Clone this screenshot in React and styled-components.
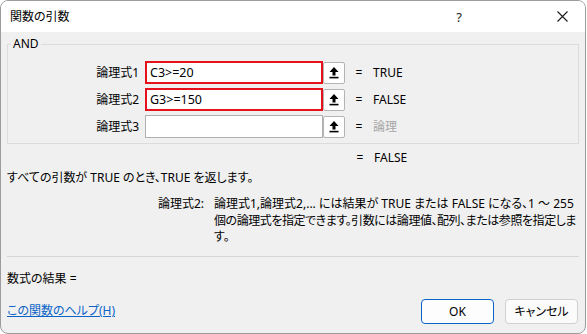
import styled, { createGlobalStyle } from "styled-components";

const GlobalStyle = createGlobalStyle`
  html, body {
    margin: 0;
    padding: 0;
    background: #ffffff;
  }
  body {
    font-family: "Noto Sans", "Noto Sans CJK JP", sans-serif;
    font-size: 12px;
    font-feature-settings: "palt";
    color: #000;
  }
`;

const args = [
  { label: "論理式1", value: "C3>=20", result: "TRUE", highlight: true },
  { label: "論理式2", value: "G3>=150", result: "FALSE", highlight: true },
  { label: "論理式3", value: "", result: "論理", muted: true },
];

const UpIcon = () => (
  <svg width="10" height="12" viewBox="0 0 10 12">
    <polygon points="5,0 9.5,5 6.5,5 6.5,8.5 3.5,8.5 3.5,5 0.5,5" fill="#000" />
    <rect x="0.5" y="9.8" width="9" height="1.6" fill="#000" />
  </svg>
);

const CloseIcon = () => (
  <svg width="11" height="11" viewBox="0 0 11 11">
    <path d="M0.5 0.5 L10.5 10.5 M10.5 0.5 L0.5 10.5" stroke="#1a1a1a" strokeWidth="1.1" fill="none" />
  </svg>
);

const App = () => {
  return (
    <>
      <GlobalStyle />
      <Window>
        <TitleBar>
          <Title>関数の引数</Title>
          <TitleButton $gap>?</TitleButton>
          <TitleButton><CloseIcon /></TitleButton>
        </TitleBar>
        <Body>
          <Group>
            <Legend>AND</Legend>
            {args.map((a) => (
              <ArgRow key={a.label}>
                <ArgLabel>{a.label}</ArgLabel>
                <InputBox $highlight={a.highlight}>{a.value}</InputBox>
                <RefButton><UpIcon /></RefButton>
                <Eq>=</Eq>
                <Value $muted={a.muted}>{a.result}</Value>
              </ArgRow>
            ))}
          </Group>
          <TotalRow>
            <Eq>=</Eq>
            <Value>FALSE</Value>
          </TotalRow>
          <Summary>すべての引数が TRUE のとき、TRUE を返します。</Summary>
          <HelpRow>
            <HelpLabel>論理式2:</HelpLabel>
            <HelpText>
              <HelpLine>論理式1,論理式2,... には結果が TRUE または FALSE になる、1 ～ 255</HelpLine>
              <HelpLine $tight>個の論理式を指定できます。引数には論理値、配列、または参照を指定しま</HelpLine>
              <HelpLine>す。</HelpLine>
            </HelpText>
          </HelpRow>
          <Divider />
          <ResultLine>数式の結果 =</ResultLine>
          <Footer>
            <HelpLink href="#">この関数のヘルプ(H)</HelpLink>
            <Buttons>
              <DialogButton $primary>OK</DialogButton>
              <DialogButton>キャンセル</DialogButton>
            </Buttons>
          </Footer>
        </Body>
      </Window>
    </>
  );
};

const Window = styled.div`
  width: 586px;
  height: 334px;
  box-sizing: border-box;
  border: 1px solid #9c9c9c;
  border-radius: 8px;
  overflow: hidden;
  background: #f0f0f0;
  display: flex;
  flex-direction: column;
`;

const TitleBar = styled.div`
  height: 31px;
  background: #ffffff;
  display: flex;
  align-items: center;
  flex-shrink: 0;
`;

const Title = styled.div`
  flex: 1;
  padding-left: 9px;
  font-size: 12px;
  line-height: 16px;
`;

const TitleButton = styled.div`
  width: 46px;
  height: 31px;
  margin-right: ${(p) => (p.$gap ? "57px" : "0")};
  display: flex;
  align-items: center;
  justify-content: center;
  font-size: 13px;
  color: #1a1a1a;
`;

const Body = styled.div`
  flex: 1;
  padding: 0 6px;
  display: flex;
  flex-direction: column;
`;

const Group = styled.div`
  position: relative;
  margin-top: 12px;
  border: 1px solid #dcdcdc;
  padding: 16px 0 5px 0;
  display: flex;
  flex-direction: column;
  gap: 4px;
`;

const Legend = styled.div`
  position: absolute;
  top: -9px;
  left: 3px;
  padding: 0 2px;
  background: #f0f0f0;
  line-height: 16px;
`;

const ArgRow = styled.div`
  display: flex;
  align-items: center;
  height: 23px;
`;

const ArgLabel = styled.div`
  width: 131px;
  flex-shrink: 0;
  margin-right: 6px;
  text-align: right;
  line-height: 16px;
`;

const InputBox = styled.div`
  width: 178px;
  height: 23px;
  flex-shrink: 0;
  box-sizing: border-box;
  background: #fff;
  border: ${(p) => (p.$highlight ? "2px solid #e5121c" : "1px solid #b0b0b0")};
  padding-left: ${(p) => (p.$highlight ? "3px" : "4px")};
  display: flex;
  align-items: center;
  font-size: 12.5px;
`;

const RefButton = styled.div`
  width: 22px;
  height: 22px;
  flex-shrink: 0;
  box-sizing: border-box;
  border: 1px solid #b4b4b4;
  border-radius: 2px;
  background: #fff;
  display: flex;
  align-items: center;
  justify-content: center;
`;

const Eq = styled.div`
  width: 28px;
  flex-shrink: 0;
  text-align: center;
  line-height: 16px;
`;

const Value = styled.div`
  line-height: 16px;
  color: ${(p) => (p.$muted ? "#a6a6a6" : "#000")};
`;

const TotalRow = styled.div`
  display: flex;
  margin-top: 6px;
  padding-left: 339px;
`;

const Summary = styled.div`
  margin-top: 4px;
  line-height: 16px;
`;

const HelpRow = styled.div`
  display: flex;
  margin-top: 10px;
`;

const HelpLabel = styled.div`
  width: 197px;
  flex-shrink: 0;
  margin-right: 10px;
  text-align: right;
  line-height: 16.5px;
`;

const HelpText = styled.div`
  display: flex;
  flex-direction: column;
  min-width: 0;
`;

const HelpLine = styled.div`
  line-height: 16.5px;
  white-space: nowrap;
  letter-spacing: ${(p) => (p.$tight ? "-0.45px" : "0")};
`;

const Divider = styled.div`
  height: 1px;
  background: #d6d6d6;
  margin-top: 10px;
`;

const ResultLine = styled.div`
  margin-top: 14px;
  line-height: 16px;
`;

const Footer = styled.div`
  display: flex;
  align-items: center;
  justify-content: space-between;
  margin-top: 12px;
  margin-right: 1px;
`;

const HelpLink = styled.a`
  color: #0a64c8;
  text-decoration: underline;
  line-height: 16px;
`;

const Buttons = styled.div`
  display: flex;
  gap: 11px;
`;

const DialogButton = styled.button`
  width: 73px;
  height: 25px;
  box-sizing: border-box;
  border-radius: 4px;
  font-family: "Noto Sans", "Noto Sans CJK JP", sans-serif;
  font-feature-settings: "palt";
  font-size: 12px;
  color: #000;
  background: ${(p) => (p.$primary ? "#fdfdfd" : "#fbfbfb")};
  border: 1px solid ${(p) => (p.$primary ? "#0a64c8" : "#d0d0d0")};
  padding: 0;
`;

export default App
